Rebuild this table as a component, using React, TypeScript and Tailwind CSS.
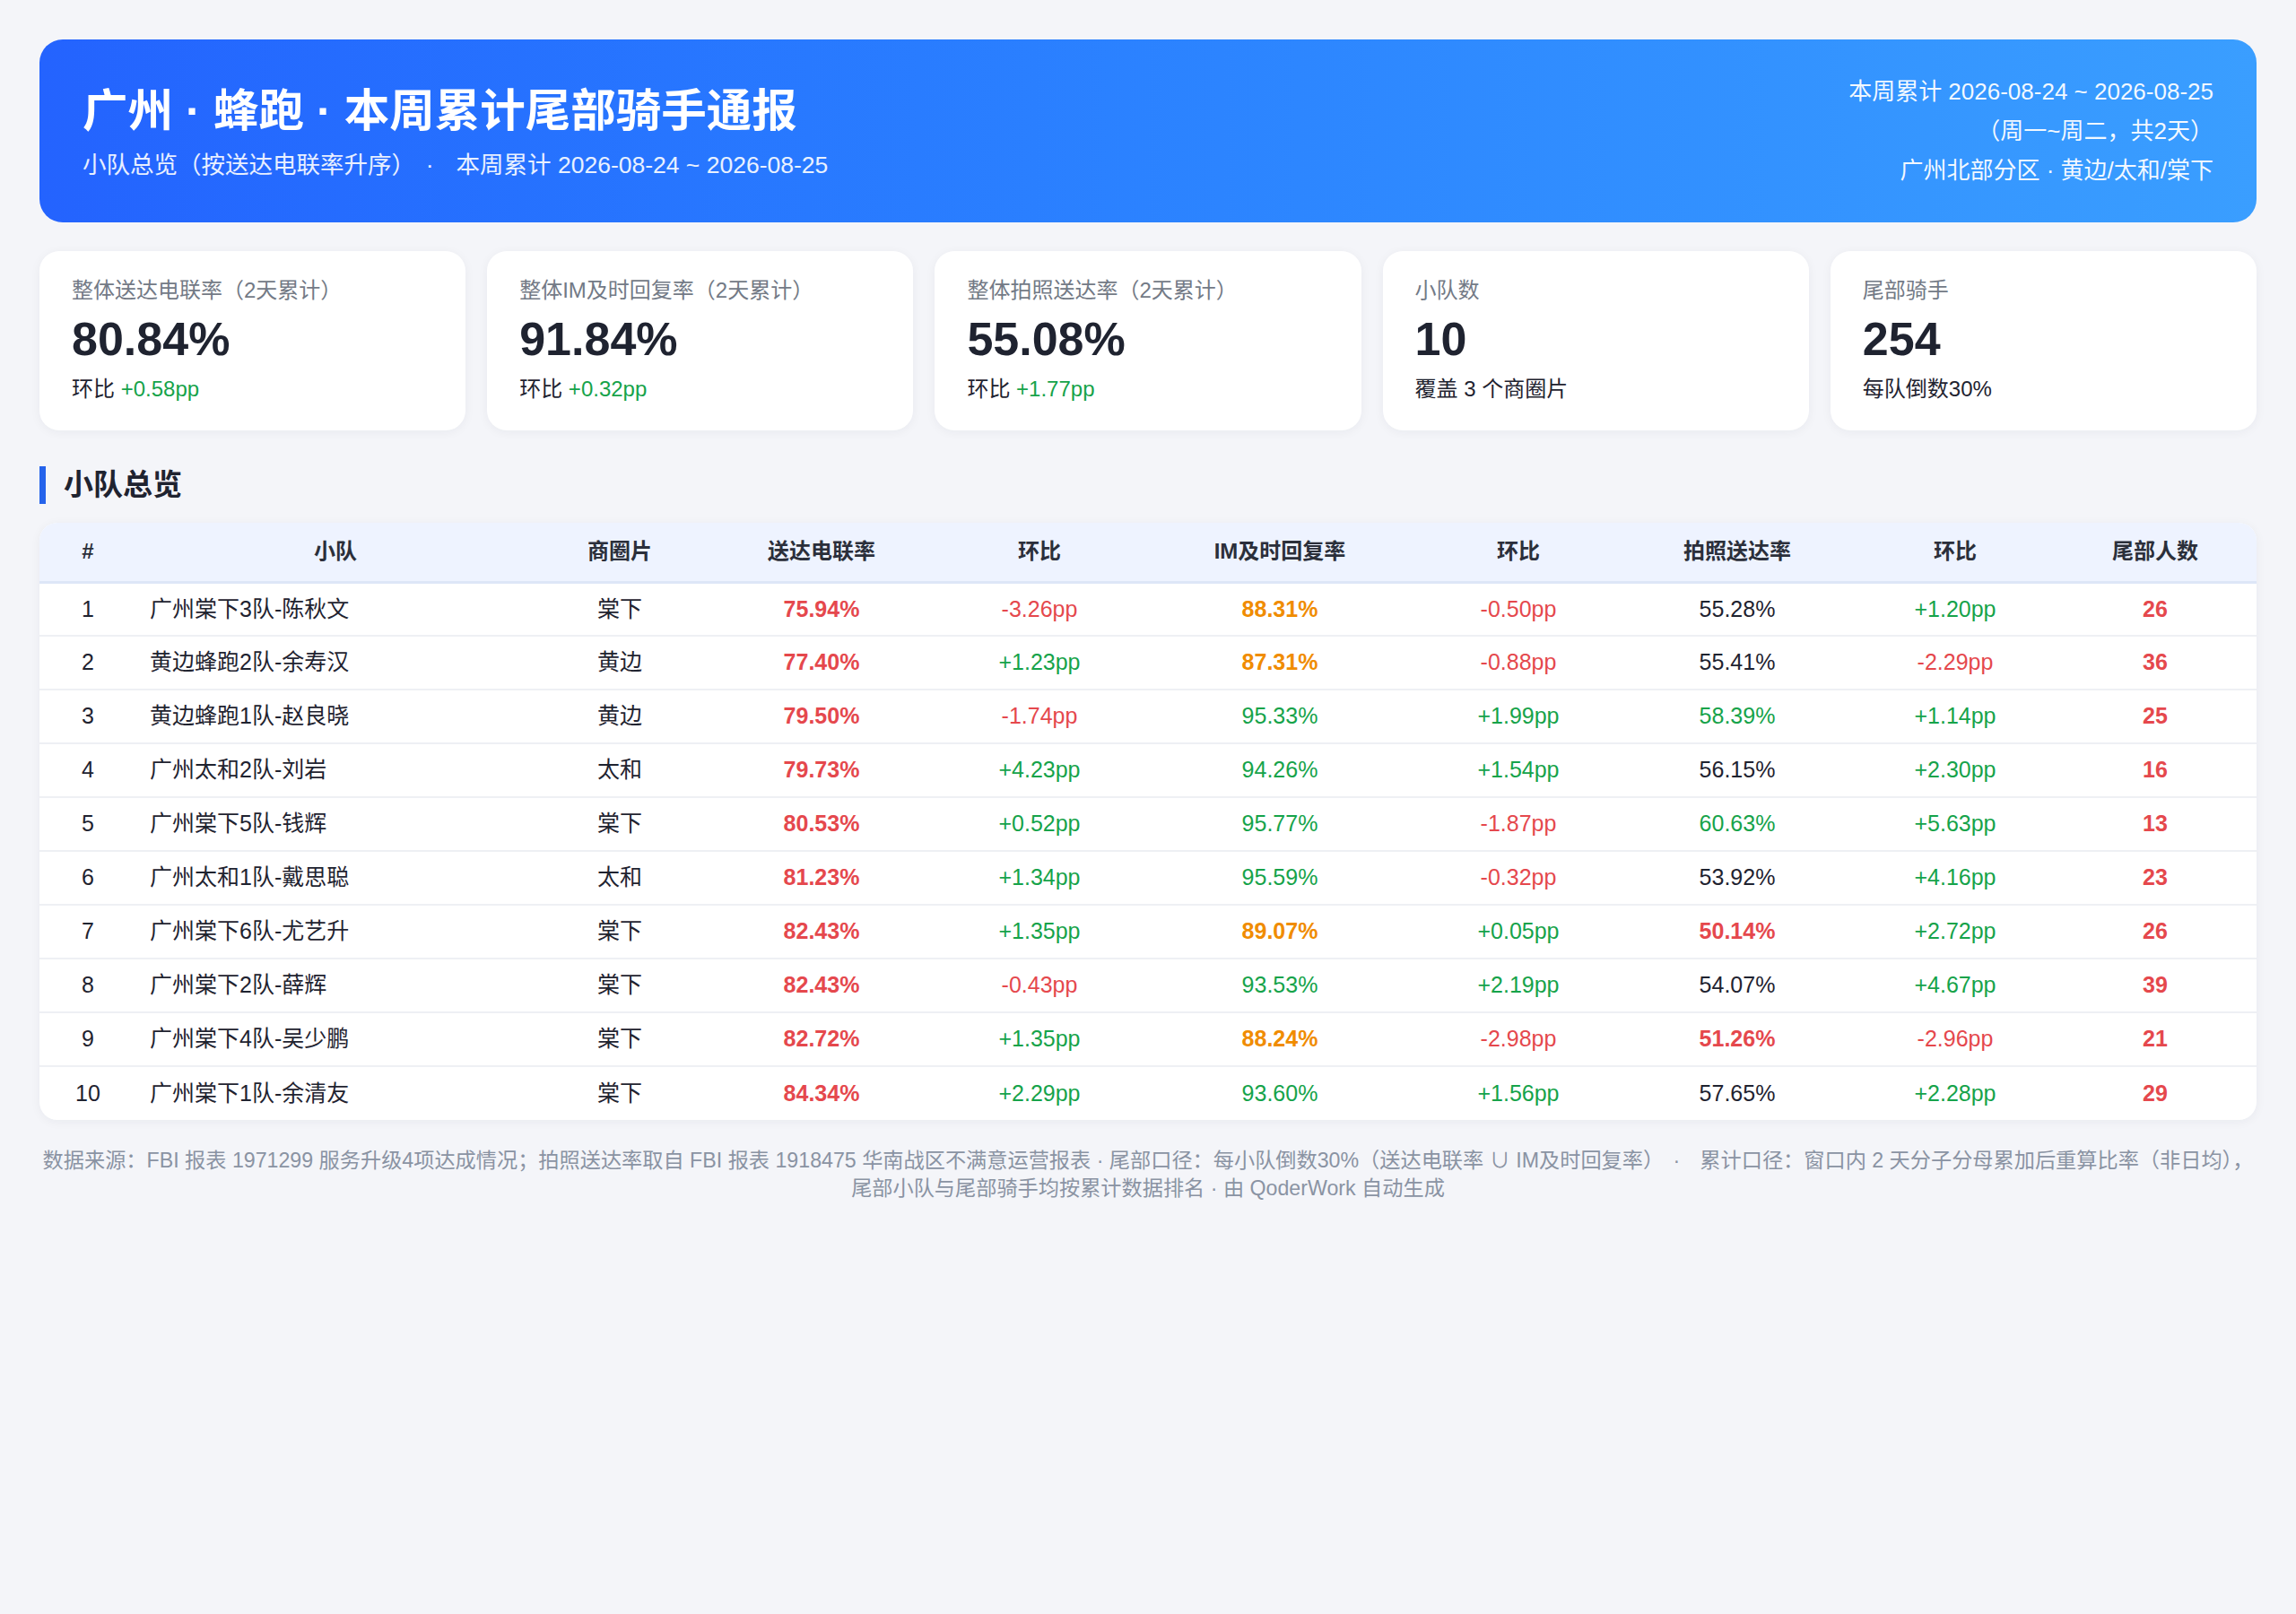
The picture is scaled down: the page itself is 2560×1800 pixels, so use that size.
const FONT = '"Liberation Sans", "Noto Sans CJK SC", sans-serif';

type Row = {
  name: string;
  area: string;
  call: string;
  callD: string;
  im: string;
  imD: string;
  photo: string;
  photoD: string;
  tail: number;
};

const rows: Row[] = [
  { name: "广州棠下3队-陈秋文", area: "棠下", call: "75.94%", callD: "-3.26pp", im: "88.31%", imD: "-0.50pp", photo: "55.28%", photoD: "+1.20pp", tail: 26 },
  { name: "黄边蜂跑2队-余寿汉", area: "黄边", call: "77.40%", callD: "+1.23pp", im: "87.31%", imD: "-0.88pp", photo: "55.41%", photoD: "-2.29pp", tail: 36 },
  { name: "黄边蜂跑1队-赵良晓", area: "黄边", call: "79.50%", callD: "-1.74pp", im: "95.33%", imD: "+1.99pp", photo: "58.39%", photoD: "+1.14pp", tail: 25 },
  { name: "广州太和2队-刘岩", area: "太和", call: "79.73%", callD: "+4.23pp", im: "94.26%", imD: "+1.54pp", photo: "56.15%", photoD: "+2.30pp", tail: 16 },
  { name: "广州棠下5队-钱辉", area: "棠下", call: "80.53%", callD: "+0.52pp", im: "95.77%", imD: "-1.87pp", photo: "60.63%", photoD: "+5.63pp", tail: 13 },
  { name: "广州太和1队-戴思聪", area: "太和", call: "81.23%", callD: "+1.34pp", im: "95.59%", imD: "-0.32pp", photo: "53.92%", photoD: "+4.16pp", tail: 23 },
  { name: "广州棠下6队-尤艺升", area: "棠下", call: "82.43%", callD: "+1.35pp", im: "89.07%", imD: "+0.05pp", photo: "50.14%", photoD: "+2.72pp", tail: 26 },
  { name: "广州棠下2队-薛辉", area: "棠下", call: "82.43%", callD: "-0.43pp", im: "93.53%", imD: "+2.19pp", photo: "54.07%", photoD: "+4.67pp", tail: 39 },
  { name: "广州棠下4队-吴少鹏", area: "棠下", call: "82.72%", callD: "+1.35pp", im: "88.24%", imD: "-2.98pp", photo: "51.26%", photoD: "-2.96pp", tail: 21 },
  { name: "广州棠下1队-余清友", area: "棠下", call: "84.34%", callD: "+2.29pp", im: "93.60%", imD: "+1.56pp", photo: "57.65%", photoD: "+2.28pp", tail: 29 },
];

const stats = [
  { label: "整体送达电联率（2天累计）", value: "80.84%", sub: "环比", delta: "+0.58pp" },
  { label: "整体IM及时回复率（2天累计）", value: "91.84%", sub: "环比", delta: "+0.32pp" },
  { label: "整体拍照送达率（2天累计）", value: "55.08%", sub: "环比", delta: "+1.77pp" },
  { label: "小队数", value: "10", sub: "覆盖 3 个商圈片" },
  { label: "尾部骑手", value: "254", sub: "每队倒数30%" },
];

const cols = [108, 444, 190, 260, 226, 310, 222, 266, 220, 226];
const heads = ["#", "小队", "商圈片", "送达电联率", "环比", "IM及时回复率", "环比", "拍照送达率", "环比", "尾部人数"];

function Delta({ v }: { v: string }) {
  return <span className={v.startsWith("-") ? "text-[#e5484d]" : "text-[#16a34a]"}>{v}</span>;
}

function imCls(v: string) {
  return parseFloat(v) < 90 ? "text-[#f08c00] font-bold" : "text-[#16a34a]";
}

function photoCls(v: string) {
  const n = parseFloat(v);
  if (n < 52) return "text-[#e5484d] font-bold";
  if (n >= 58) return "text-[#16a34a]";
  return "text-[#1f2330]";
}

export default function App() {
  return (
    <div className="min-h-screen bg-[#f4f5f9] p-[44px] text-[#1f2330]" style={{ fontFamily: FONT }}>
      <header className="flex items-center justify-between rounded-[26px] bg-gradient-to-r from-[#2463fe] to-[#3a9eff] px-[48px] py-[36px] text-white">
        <div>
          <h1 className="text-[50.5px] font-bold leading-[70px]">广州 · 蜂跑 · 本周累计尾部骑手通报</h1>
          <p className="mt-[6px] text-[26.5px] leading-[39px] text-white/90">
            小队总览（按送达电联率升序）<span className="mx-[25px]">·</span>本周累计 2026-08-24 ~ 2026-08-25
          </p>
        </div>
        <div className="text-right text-[26px] leading-[44px] text-white/95">
          <div>本周累计 2026-08-24 ~ 2026-08-25</div>
          <div>（周一~周二，共2天）</div>
          <div>广州北部分区 · 黄边/太和/棠下</div>
        </div>
      </header>

      <section className="mt-[32px] grid grid-cols-5 gap-[24px]">
        {stats.map((s) => (
          <div key={s.label} className="rounded-[22px] bg-white px-[36px] pb-[28px] pt-[26px] shadow-[0_2px_12px_rgba(20,30,60,0.05)]">
            <div className="text-[24px] leading-[36px] text-[#737a86]">{s.label}</div>
            <div className="mt-[4px] text-[52px] font-bold leading-[64px] text-[#1f2330]">{s.value}</div>
            <div className="mt-[6px] text-[24px] leading-[36px] text-[#1f2330]">
              {s.sub}
              {s.delta && <span className="text-[#16a34a]"> {s.delta}</span>}
            </div>
          </div>
        ))}
      </section>

      <h2 className="mt-[40px] flex h-[42px] items-center border-l-[7px] border-[#2563eb] pl-[20px] text-[33px] font-bold leading-[42px] text-[#1f2330]">
        小队总览
      </h2>

      <div className="mt-[21px] overflow-hidden rounded-[20px] bg-white shadow-[0_2px_12px_rgba(20,30,60,0.05)]">
        <table className="w-full table-fixed border-collapse text-[25px]">
          <colgroup>
            {cols.map((w, i) => (
              <col key={i} style={{ width: w }} />
            ))}
          </colgroup>
          <thead>
            <tr className="h-[66px] border-b-[3px] border-[#dde6f7] bg-[#eef3ff]">
              {heads.map((h, i) => (
                <th key={i} className="text-center text-[24px] font-bold text-[#2b2f3a]">
                  {h}
                </th>
              ))}
            </tr>
          </thead>
          <tbody>
            {rows.map((r, i) => (
              <tr key={i} className="h-[60px] border-b-2 border-[#eef0f4] text-center last:border-b-0">
                <td>{i + 1}</td>
                <td className="pl-[15px] text-left">{r.name}</td>
                <td>{r.area}</td>
                <td className="font-bold text-[#e5484d]">{r.call}</td>
                <td>
                  <Delta v={r.callD} />
                </td>
                <td className={imCls(r.im)}>{r.im}</td>
                <td>
                  <Delta v={r.imD} />
                </td>
                <td className={photoCls(r.photo)}>{r.photo}</td>
                <td>
                  <Delta v={r.photoD} />
                </td>
                <td className="font-bold text-[#e5484d]">{r.tail}</td>
              </tr>
            ))}
          </tbody>
        </table>
      </div>

      <footer className="mt-[30px] text-center text-[23.2px] leading-[31px] text-[#8a93a3]">
        <div className="whitespace-nowrap">
          数据来源：FBI 报表 1971299 服务升级4项达成情况；拍照送达率取自 FBI 报表 1918475 华南战区不满意运营报表 · 尾部口径：每小队倒数30%（送达电联率 ∪ IM及时回复率）<span className="mx-[22px]">·</span>累计口径：窗口内 2 天分子分母累加后重算比率（非日均），
        </div>
        <div className="whitespace-nowrap">尾部小队与尾部骑手均按累计数据排名 · 由 QoderWork 自动生成</div>
      </footer>
    </div>
  );
}
